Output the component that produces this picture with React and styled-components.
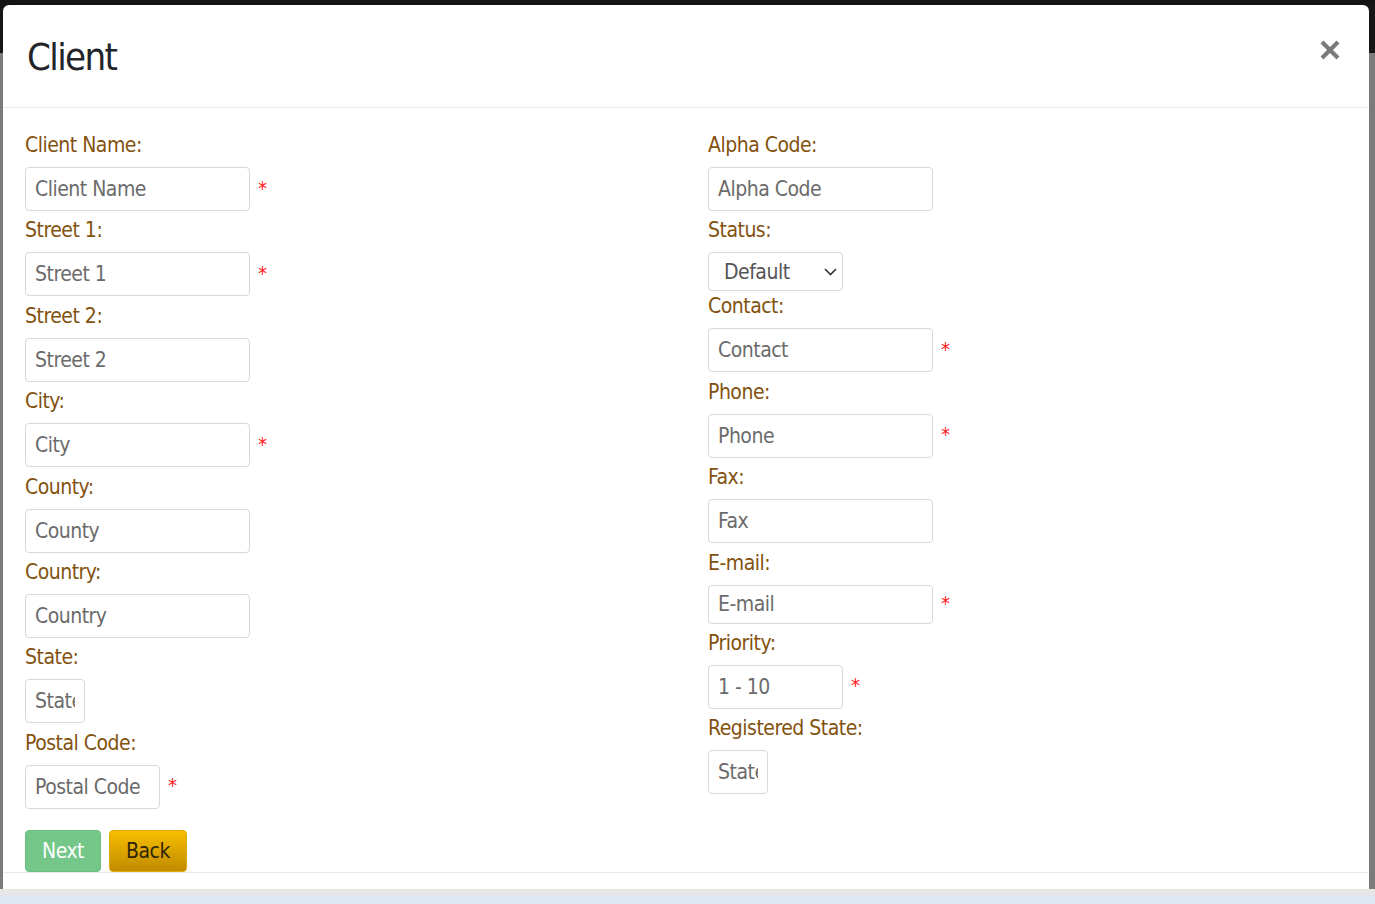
import React from "react";
import styled, { createGlobalStyle, css } from "styled-components";

const Global = createGlobalStyle`
  html, body { margin: 0; padding: 0; }
  body {
    font-family: "DejaVu Sans Condensed", Roboto, sans-serif;
    background: #151515;
  }
  * { box-sizing: border-box; }
`;

const Page = styled.div`
  width: 1375px;
  height: 904px;
  display: flex;
  flex-direction: column;
  overflow: hidden;
  background: #151515;
`;

const TopStrip = styled.div`
  height: 5px;
  flex: none;
  background: #141414;
`;

const Middle = styled.div`
  height: 884px;
  flex: none;
  display: flex;
`;

const Gutter = styled.div`
  width: ${(p) => p.$w}px;
  flex: none;
  background: linear-gradient(to bottom, #161616 0 48px, #7b7b7b 48px);
`;

const Modal = styled.div`
  width: 1366px;
  flex: none;
  background: #fff;
  border-radius: 6px 6px 0 0;
  display: flex;
  flex-direction: column;
`;

const Header = styled.div`
  height: 103px;
  flex: none;
  border-bottom: 1px solid #e9ecef;
  display: flex;
  align-items: center;
  justify-content: space-between;
  padding: 0 29px 0 24px;
`;

const Title = styled.h4`
  margin: 0;
  margin-top: 4px;
  font-size: 38px;
  letter-spacing: -1.6px;
  font-weight: 400;
  line-height: 1.2;
  color: #212529;
`;

const Close = styled.button`
  align-self: flex-start;
  margin-top: 35px;
  width: 20px;
  height: 20px;
  padding: 0;
  border: 0;
  background: none;
  display: flex;
  cursor: pointer;
`;

const Body = styled.div`
  display: grid;
  grid-template-columns: 683px 1fr;
  padding: 22px 0 0 22px;
`;

const Column = styled.div`
  display: flex;
  flex-direction: column;
  align-items: flex-start;
`;

const Field = styled.div`
  display: flex;
  flex-direction: column;
  align-items: flex-start;
  padding-bottom: ${(p) => (p.$tight ? 0 : 4.4)}px;
`;

const Label = styled.label`
  font-size: 21px;
  letter-spacing: -0.5px;
  line-height: 30px;
  color: #83520f;
  margin-bottom: 7px;
`;

const InputRow = styled.div`
  display: flex;
  align-items: center;
  gap: 8px;
`;

const fieldBox = css`
  height: ${(p) => p.$h || 44}px;
  width: ${(p) => p.$w || 225}px;
  border: 1px solid #d8d8d8;
  border-radius: 4px;
  background: #fff;
  font-family: inherit;
  font-size: 21px;
  letter-spacing: -0.5px;
  color: #555;
  outline: none;
`;

const Input = styled.input`
  ${fieldBox};
  padding: 0 9px;
  &::placeholder { color: #6b6b6b; opacity: 1; }
`;

const SelectWrap = styled.div`
  position: relative;
  display: flex;
`;

const Select = styled.select`
  ${fieldBox};
  appearance: none;
  -webkit-appearance: none;
  padding: 0 30px 0 15px;
  color: #555;
`;

const Chevron = styled.svg`
  position: absolute;
  right: 6px;
  top: 50%;
  margin-top: -4px;
  pointer-events: none;
`;

const Required = styled.span`
  color: #ff1a1a;
  font-size: 20px;
  line-height: 1;
  margin-top: -3px;
`;

const Actions = styled.div`
  display: flex;
  gap: 8px;
  margin-top: 16.6px;
`;

const Button = styled.button`
  height: 42px;
  padding: 0 16px;
  border-radius: 4px;
  font-family: inherit;
  font-size: 21px;
  letter-spacing: -0.5px;
  cursor: pointer;
  ${(p) =>
    p.$variant === "success"
      ? css`
          background: #74c789;
          border: 1px solid #6cbf81;
          color: #fff;
        `
      : css`
          background: linear-gradient(to bottom, #f8be00, #c08b00);
          border: 1px solid #e2aa00;
          color: #2f2608;
        `}
`;

const Footer = styled.div`
  flex: 1;
  border-top: 1px solid #e9ecef;
`;

const Bottom = styled.div`
  flex: 1;
  border-top: 6px solid #e6e6e6;
  background: #dde6f1;
`;

function TextField({ label, placeholder, width, height, required, tight, type = "text" }) {
  return (
    <Field $tight={tight}>
      <Label>{label}</Label>
      <InputRow>
        <Input type={type} placeholder={placeholder} $w={width} $h={height} />
        {required && <Required>*</Required>}
      </InputRow>
    </Field>
  );
}

const leftFields = [
  { label: "Client Name:", placeholder: "Client Name", required: true },
  { label: "Street 1:", placeholder: "Street 1", required: true },
  { label: "Street 2:", placeholder: "Street 2" },
  { label: "City:", placeholder: "City", required: true },
  { label: "County:", placeholder: "County" },
  { label: "Country:", placeholder: "Country" },
  { label: "State:", placeholder: "State", width: 60 },
  { label: "Postal Code:", placeholder: "Postal Code", width: 135, required: true },
];

const rightFields = [
  { label: "Contact:", placeholder: "Contact", required: true },
  { label: "Phone:", placeholder: "Phone", required: true },
  { label: "Fax:", placeholder: "Fax" },
  { label: "E-mail:", placeholder: "E-mail", required: true, height: 39, type: "email" },
  { label: "Priority:", placeholder: "1 - 10", width: 135, required: true },
  { label: "Registered State:", placeholder: "State", width: 60 },
];

export default function App() {
  return (
    <>
      <Global />
      <Page>
        <TopStrip />
        <Middle>
          <Gutter $w={3} />
          <Modal>
            <Header>
              <Title>Client</Title>
              <Close aria-label="Close">
                <svg width="20" height="20" viewBox="0 0 20 20">
                  <path d="M2 2 L18 18 M18 2 L2 18" stroke="#7a7a7a" strokeWidth="4.2" />
                </svg>
              </Close>
            </Header>
            <Body>
              <Column>
                {leftFields.map((f) => (
                  <TextField key={f.label} {...f} />
                ))}
                <Actions>
                  <Button $variant="success">Next</Button>
                  <Button $variant="warning">Back</Button>
                </Actions>
              </Column>
              <Column>
                <TextField label="Alpha Code:" placeholder="Alpha Code" />
                <Field $tight>
                  <Label>Status:</Label>
                  <SelectWrap>
                    <Select $w={135} $h={39} defaultValue="Default">
                      <option>Default</option>
                      <option>Active</option>
                      <option>Inactive</option>
                    </Select>
                    <Chevron width="13" height="8" viewBox="0 0 13 8">
                      <path d="M1 1 L6.5 6.5 L12 1" fill="none" stroke="#333" strokeWidth="1.6" />
                    </Chevron>
                  </SelectWrap>
                </Field>
                {rightFields.map((f) => (
                  <TextField key={f.label} {...f} />
                ))}
              </Column>
            </Body>
            <Footer />
          </Modal>
          <Gutter $w={6} />
        </Middle>
        <Bottom />
      </Page>
    </>
  );
}
